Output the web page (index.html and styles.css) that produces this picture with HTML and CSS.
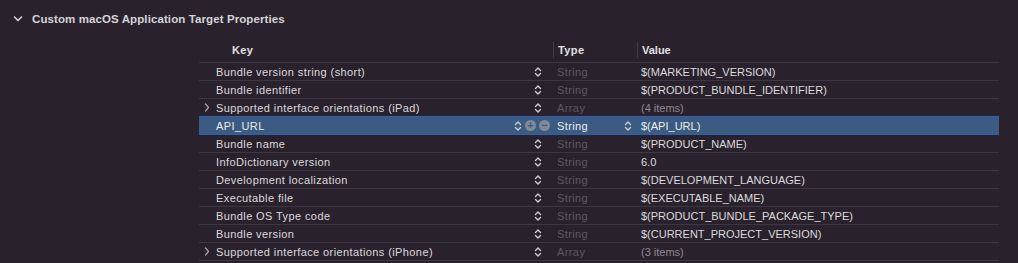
FILE: index.html
```html
<!DOCTYPE html>
<html lang="en">
<head>
  <meta charset="UTF-8" />
  <title>Target Properties</title>
  <link rel="stylesheet" href="styles.css">
</head>
<body>
  <div class="section-head">
    <svg class="chev-down" width="10" height="8" viewBox="0 0 10 8"><path d="M1.5 2 L5 5.5 L8.5 2" fill="none" stroke="#d6d4d8" stroke-width="1.6" stroke-linecap="round" stroke-linejoin="round"/></svg>
    <span class="section-title">Custom macOS Application Target Properties</span>
  </div>

  <div class="plist">
    <div class="row head">
      <div class="cell key"><span class="label">Key</span></div>
      <div class="cell type">Type</div>
      <div class="cell value">Value</div>
    </div>

    <div class="row">
      <div class="cell key"><span class="label">Bundle version string (short)</span><span class="stepper"></span></div>
      <div class="cell type dim">String</div>
      <div class="cell value">$(MARKETING_VERSION)</div>
    </div>
    <div class="row">
      <div class="cell key"><span class="label">Bundle identifier</span><span class="stepper"></span></div>
      <div class="cell type dim">String</div>
      <div class="cell value">$(PRODUCT_BUNDLE_IDENTIFIER)</div>
    </div>
    <div class="row">
      <div class="cell key"><svg class="disclose" width="6" height="9" viewBox="0 0 6 9"><path d="M1.5 1 L4.5 4.5 L1.5 8" fill="none" stroke="#a9a5ac" stroke-width="1.2" stroke-linecap="round" stroke-linejoin="round"/></svg><span class="label">Supported interface orientations (iPad)</span><span class="stepper"></span></div>
      <div class="cell type dim">Array</div>
      <div class="cell value dim2">(4 items)</div>
    </div>
    <div class="row selected">
      <div class="cell key"><span class="label">API_URL</span><span class="stepper"></span><span class="round">+</span><span class="round">&minus;</span></div>
      <div class="cell type">String<span class="stepper"></span></div>
      <div class="cell value">$(API_URL)</div>
    </div>
    <div class="row">
      <div class="cell key"><span class="label">Bundle name</span><span class="stepper"></span></div>
      <div class="cell type dim">String</div>
      <div class="cell value">$(PRODUCT_NAME)</div>
    </div>
    <div class="row">
      <div class="cell key"><span class="label">InfoDictionary version</span><span class="stepper"></span></div>
      <div class="cell type dim">String</div>
      <div class="cell value">6.0</div>
    </div>
    <div class="row">
      <div class="cell key"><span class="label">Development localization</span><span class="stepper"></span></div>
      <div class="cell type dim">String</div>
      <div class="cell value">$(DEVELOPMENT_LANGUAGE)</div>
    </div>
    <div class="row">
      <div class="cell key"><span class="label">Executable file</span><span class="stepper"></span></div>
      <div class="cell type dim">String</div>
      <div class="cell value">$(EXECUTABLE_NAME)</div>
    </div>
    <div class="row">
      <div class="cell key"><span class="label">Bundle OS Type code</span><span class="stepper"></span></div>
      <div class="cell type dim">String</div>
      <div class="cell value">$(PRODUCT_BUNDLE_PACKAGE_TYPE)</div>
    </div>
    <div class="row">
      <div class="cell key"><span class="label">Bundle version</span><span class="stepper"></span></div>
      <div class="cell type dim">String</div>
      <div class="cell value">$(CURRENT_PROJECT_VERSION)</div>
    </div>
    <div class="row">
      <div class="cell key"><svg class="disclose" width="6" height="9" viewBox="0 0 6 9"><path d="M1.5 1 L4.5 4.5 L1.5 8" fill="none" stroke="#a9a5ac" stroke-width="1.2" stroke-linecap="round" stroke-linejoin="round"/></svg><span class="label">Supported interface orientations (iPhone)</span><span class="stepper"></span></div>
      <div class="cell type dim">Array</div>
      <div class="cell value dim2">(3 items)</div>
    </div>
  </div>
</body>
</html>
```

FILE: styles.css
```css
* {
  box-sizing: border-box;
  margin: 0;
  padding: 0;
}

body {
  background: #29222c;
  color: #dcdadd;
  font-family: 'Liberation Sans', Arial, sans-serif;
  font-size: 11px;
  width: 1018px;
  height: 263px;
  overflow: hidden;
}

.section-head {
  height: 37px;
  display: flex;
  align-items: center;
  padding-left: 13px;
  gap: 9px;
}

.section-title {
  font-weight: bold;
  font-size: 11.5px;
  letter-spacing: 0.1px;
  color: #d6d4d8;
}

.plist {
  margin-left: 199px;
  width: 800px;
}

.row {
  display: grid;
  grid-template-columns: 354px 84px 1fr;
  height: 18px;
  border-bottom: 1px solid #3d3741;
  align-items: center;
}

.row.head {
  height: 26px;
  font-weight: bold;
  color: #e2e0e4;
}

.row.head .cell {
  border-left: 1px solid #413b45;
  height: 16px;
}

.row.head .key {
  border-left: none;
  padding-left: 33px;
}

.cell {
  display: flex;
  align-items: center;
  height: 100%;
  white-space: nowrap;
}

.key {
  padding-left: 17px;
  position: relative;
  letter-spacing: 0.4px;
}

.type {
  padding-left: 4px;
  letter-spacing: 0.4px;
}

.value {
  padding-left: 4px;
}

.label {
  flex: 1;
}

.disclose {
  position: absolute;
  left: 5px;
  top: 4px;
}

.dim {
  color: #5e5862;
}

.dim2 {
  color: #8e8992;
}

.stepper {
  width: 8px;
  height: 12px;
  margin-right: 11px;
  background:
    no-repeat center / 8px 12px
    url("data:image/svg+xml;utf8,<svg xmlns='http://www.w3.org/2000/svg' width='8' height='12' viewBox='0 0 8 12'><path d='M1.5 4.5 L4 2 L6.5 4.5 M1.5 7.5 L4 10 L6.5 7.5' fill='none' stroke='%23cfcdd2' stroke-width='1.4' stroke-linecap='round' stroke-linejoin='round'/></svg>");
}

.row.selected {
  background: #3b5b82;
  border-top: 1px solid #2f5fb8;
  border-bottom: 1px solid #2f5fb8;
  height: 19px;
  margin-top: -1px;
  color: #ecebee;
}

.row.selected .key .stepper {
  margin-right: 3px;
}

.row.selected .type .stepper {
  margin-left: auto;
  margin-right: 5px;
}

.round {
  width: 11px;
  height: 11px;
  border-radius: 50%;
  background: #7f8a97;
  color: #3b5b82;
  font-weight: bold;
  font-size: 11px;
  line-height: 11px;
  text-align: center;
  letter-spacing: 0;
  margin-right: 3px;
}
```
